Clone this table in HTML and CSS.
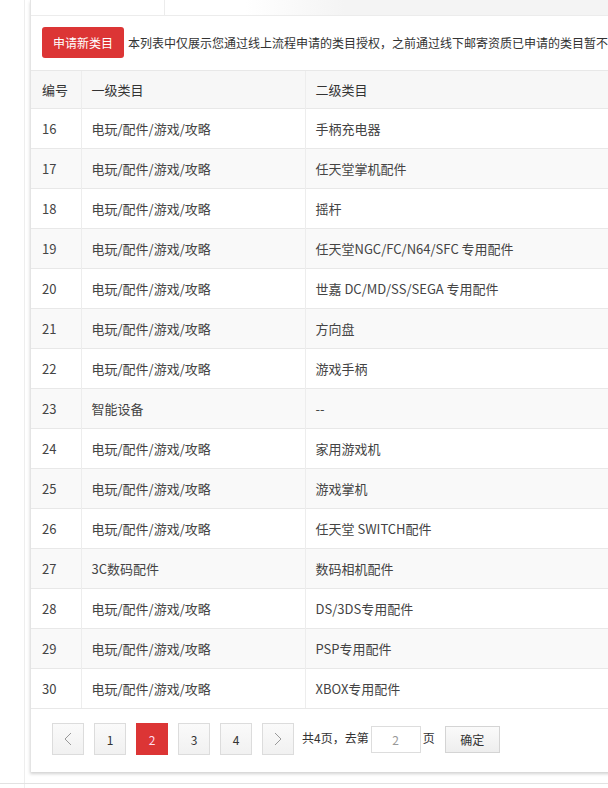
FILE: index.html
```html
<!DOCTYPE html>
<html lang="zh">
<head>
<meta charset="utf-8">
<link rel="stylesheet" href="styles.css">
</head>
<body>
<div class="page">
  <div class="card">
    <div class="tabs">
      <div class="tab-cell"></div>
      <div class="tab-rest"></div>
    </div>
    <div class="toolbar">
      <button class="btn-red">申请新类目</button>
      <span class="note">本列表中仅展示您通过线上流程申请的类目授权，之前通过线下邮寄资质已申请的类目暂不展示</span>
    </div>
    <table class="grid">
      <colgroup><col class="c1"><col class="c2"><col class="c3"></colgroup>
      <thead>
        <tr><th>编号</th><th>一级类目</th><th>二级类目</th></tr>
      </thead>
      <tbody>
        <tr><td>16</td><td>电玩/配件/游戏/攻略</td><td>手柄充电器</td></tr>
        <tr><td>17</td><td>电玩/配件/游戏/攻略</td><td>任天堂掌机配件</td></tr>
        <tr><td>18</td><td>电玩/配件/游戏/攻略</td><td>摇杆</td></tr>
        <tr><td>19</td><td>电玩/配件/游戏/攻略</td><td>任天堂NGC/FC/N64/SFC 专用配件</td></tr>
        <tr><td>20</td><td>电玩/配件/游戏/攻略</td><td>世嘉 DC/MD/SS/SEGA 专用配件</td></tr>
        <tr><td>21</td><td>电玩/配件/游戏/攻略</td><td>方向盘</td></tr>
        <tr><td>22</td><td>电玩/配件/游戏/攻略</td><td>游戏手柄</td></tr>
        <tr><td>23</td><td>智能设备</td><td>--</td></tr>
        <tr><td>24</td><td>电玩/配件/游戏/攻略</td><td>家用游戏机</td></tr>
        <tr><td>25</td><td>电玩/配件/游戏/攻略</td><td>游戏掌机</td></tr>
        <tr><td>26</td><td>电玩/配件/游戏/攻略</td><td>任天堂 SWITCH配件</td></tr>
        <tr><td>27</td><td>3C数码配件</td><td>数码相机配件</td></tr>
        <tr><td>28</td><td>电玩/配件/游戏/攻略</td><td>DS/3DS专用配件</td></tr>
        <tr><td>29</td><td>电玩/配件/游戏/攻略</td><td>PSP专用配件</td></tr>
        <tr><td>30</td><td>电玩/配件/游戏/攻略</td><td>XBOX专用配件</td></tr>
      </tbody>
    </table>
    <div class="pager">
      <a class="pg"><svg width="8" height="14" viewBox="0 0 8 14"><polyline points="7,1 1,7 7,13" fill="none" stroke="#999" stroke-width="1"/></svg></a>
      <a class="pg">1</a>
      <a class="pg active">2</a>
      <a class="pg">3</a>
      <a class="pg">4</a>
      <a class="pg"><svg width="8" height="14" viewBox="0 0 8 14"><polyline points="1,1 7,7 1,13" fill="none" stroke="#999" stroke-width="1"/></svg></a>
      <span class="pg-text">共4页，去第</span>
      <span class="pg-input">2</span>
      <span class="pg-text">页</span>
      <span class="pg-ok">确定</span>
    </div>
  </div>
  <div class="bottom-line"></div>
</div>
</body>
</html>
```

FILE: styles.css
```css
html, body {
  margin: 0;
  padding: 0;
  background: #fff;
  overflow: hidden;
}
body {
  font-family: "Noto Sans CJK SC", "Noto Sans", sans-serif;
  font-size: 13px;
  color: #444;
}
.page {
  margin-left: 24px;
  border-left: 1px solid #eee;
  padding-left: 5px;
  height: 788px;
  position: relative;
}
.card {
  width: 720px;
  background: #fff;
  border-left: 1px solid #e4e4e4;
  box-shadow: 0 2px 3px rgba(0, 0, 0, 0.18);
}
.tabs {
  display: flex;
  height: 15px;
  border-bottom: 1px solid #ececec;
}
.tab-cell {
  width: 133px;
  border-right: 1px solid #ececec;
  background: #fff;
}
.tab-rest {
  flex: 1;
  background: linear-gradient(to right, #fff 0, #fff 80px, #f4f4f4 180px, #f4f4f4 100%);
}
.toolbar {
  display: flex;
  align-items: flex-start;
  gap: 4px;
  padding: 11px 11px 0;
  height: 43px;
}
.btn-red {
  height: 31px;
  width: 82px;
  border: 0;
  border-radius: 3px;
  background: #dc3535;
  color: #fff;
  font-family: inherit;
  font-size: 12px;
  padding: 0;
}
.note {
  white-space: nowrap;
  line-height: 31px;
  font-size: 12px;
  color: #333;
}
.grid {
  border-collapse: collapse;
  width: 100%;
  table-layout: fixed;
}
.c1 { width: 50px; }
.c2 { width: 224px; }
.grid th, .grid td {
  height: 39px;
  padding: 0 10px;
  text-align: left;
  font-weight: normal;
  border-top: 1px solid #e8e8e8;
  border-left: 1px solid #ededed;
  white-space: nowrap;
}
.grid th {
  height: 37px;
}
.grid th:first-child, .grid td:first-child {
  border-left: 0;
  padding-left: 11px;
}
.grid thead th {
  background: #f7f7f7;
  color: #333;
  font-size: 13px;
}
.grid tbody tr:nth-child(even) td {
  background: #f9f9f9;
}
.pager {
  display: flex;
  align-items: center;
  border-top: 1px solid #e8e8e8;
  padding: 14px 21px 17px;
  height: 32px;
}
.pg {
  width: 30px;
  height: 30px;
  border: 1px solid #dcdcdc;
  background: linear-gradient(#fafafa, #f1f1f1);
  display: flex;
  align-items: center;
  justify-content: center;
  margin-right: 10px;
  font-size: 12px;
  color: #333;
}
.pager .pg:nth-of-type(6) {
  margin-right: 8px;
}
.pg.active {
  background: #dc3535;
  border-color: #dc3535;
  color: #fde;
}
.pg-text {
  font-size: 12px;
  color: #333;
  margin-top: -4px;
}
.pg-input {
  width: 48px;
  height: 25px;
  border: 1px solid #ddd;
  margin: 0 2px;
  display: flex;
  align-items: center;
  justify-content: center;
  color: #999;
  font-size: 12px;
  background: #fff;
}
.pg-ok {
  width: 53px;
  height: 25px;
  margin-left: 10px;
  border: 1px solid #d4d4d4;
  background: linear-gradient(#fafafa, #eeeeee);
  display: flex;
  align-items: center;
  justify-content: center;
  font-size: 12px;
  color: #333;
}
.bottom-line {
  position: absolute;
  left: -30px;
  right: 0;
  top: 783px;
  border-top: 1px solid #e2e2e2;
}
```
